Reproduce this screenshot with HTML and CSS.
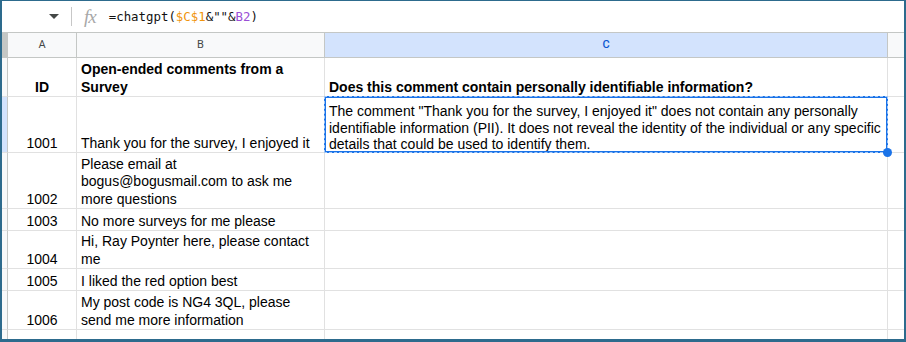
FILE: index.html
```html
<!DOCTYPE html>
<html lang="en">
<head>
  <meta charset="UTF-8">
  <title>Sheet - chatgpt PII check</title>
  <link rel="stylesheet" href="styles.css">
</head>
<body>

<div class="frame">
  <!-- Formula bar -->
  <div class="formula-bar">
    <span class="name-box"><span class="caret"></span></span>
    <span class="fx-sep"></span>
    <span class="fx">fx</span>
    <span class="formula">=chatgpt(<span class="ref-c">$C$1</span>&amp;""&amp;<span class="ref-b">B2</span>)</span>
  </div>

  <!-- Grid -->
  <div class="sheet">
    <!-- column headers -->
    <div class="corner"></div>
    <div class="col-head">A</div>
    <div class="col-head">B</div>
    <div class="col-head active">C</div>
    <div class="col-head"></div>

    <!-- Row 1 -->
    <div class="row-head"></div>
    <div class="cell center bold">ID</div>
    <div class="cell bold">Open-ended comments from a Survey</div>
    <div class="cell bold">Does this comment contain personally identifiable information?</div>
    <div class="cell"></div>

    <!-- Row 2 -->
    <div class="row-head active"></div>
    <div class="cell center">1001</div>
    <div class="cell">Thank you for the survey, I enjoyed it</div>
    <div class="cell selected">The comment "Thank you for the survey, I enjoyed it" does not contain any personally identifiable information (PII). It does not reveal the identity of the individual or any specific details that could be used to identify them.<span class="handle"></span></div>
    <div class="cell"></div>

    <!-- Row 3 -->
    <div class="row-head"></div>
    <div class="cell center">1002</div>
    <div class="cell">Please email at bogus@bogusmail.com to ask me more questions</div>
    <div class="cell"></div>
    <div class="cell"></div>

    <!-- Row 4 -->
    <div class="row-head"></div>
    <div class="cell center">1003</div>
    <div class="cell">No more surveys for me please</div>
    <div class="cell"></div>
    <div class="cell"></div>

    <!-- Row 5 -->
    <div class="row-head"></div>
    <div class="cell center">1004</div>
    <div class="cell">Hi, Ray Poynter here, please contact me</div>
    <div class="cell"></div>
    <div class="cell"></div>

    <!-- Row 6 -->
    <div class="row-head"></div>
    <div class="cell center">1005</div>
    <div class="cell">I liked the red option best</div>
    <div class="cell"></div>
    <div class="cell"></div>

    <!-- Row 7 -->
    <div class="row-head"></div>
    <div class="cell center">1006</div>
    <div class="cell">My post code is NG4 3QL, please send me more information</div>
    <div class="cell"></div>
    <div class="cell"></div>

    <!-- Row 8 (cut off) -->
    <div class="row-head"></div>
    <div class="cell"></div>
    <div class="cell"></div>
    <div class="cell"></div>
    <div class="cell"></div>
  </div>
</div>

</body>
</html>
```

FILE: styles.css
```css
/* BASE */
* {
  box-sizing: border-box;
}
body {
  margin: 0;
  padding: 0;
  background: #fff;
  font-family: "Liberation Sans", Arial, sans-serif;
  color: #000;
}

/* FRAME */
.frame {
  width: 906px;
  height: 342px;
  border: 2px solid #2d6b8d;
  border-top-width: 1px;
  border-bottom-width: 3px;
  overflow: hidden;
  background: #fff;
}

/* FORMULA BAR */
.formula-bar {
  height: 32px;
  display: flex;
  align-items: center;
  border-bottom: 1px solid #c4c7c5;
}
.name-box {
  width: 69px;
  display: flex;
  justify-content: flex-end;
  padding-right: 12px;
}
.caret {
  width: 0;
  height: 0;
  border-left: 5px solid transparent;
  border-right: 5px solid transparent;
  border-top: 5px solid #444746;
}
.fx-sep {
  width: 1px;
  height: 19px;
  background: #c7c7c7;
}
.fx {
  margin-left: 12px;
  font-family: "Liberation Serif", serif;
  font-style: italic;
  font-size: 19px;
  color: #a8a8a8;
  letter-spacing: -1px;
}
.formula {
  margin-left: 13px;
  font-family: "DejaVu Sans Mono", monospace;
  font-size: 12.4px;
  color: #111;
}
.ref-c { color: #f0950c; }
.ref-b { color: #9a4fd6; }

/* SHEET GRID */
.sheet {
  display: grid;
  grid-template-columns: 6px 69px 248px 563px 20px;
  grid-template-rows: 25px 39px 56px 56px 22px 38px 22px 39px 20px;
  font-size: 14px;
  line-height: 17.5px;
}
.corner {
  background: #c4c7c5;
  border-bottom: 1px solid #c4c7c5;
}
.col-head {
  display: flex;
  align-items: center;
  justify-content: center;
  background: #f8f9fa;
  border-right: 1px solid #c4c7c5;
  border-bottom: 1px solid #c4c7c5;
  font-family: Roboto, "Liberation Sans", sans-serif;
  font-size: 11px;
  color: #444746;
}
.col-head.active {
  background: #d3e3fd;
  color: #0b57d0;
  font-weight: 500;
}
.row-head {
  background: #f8f9fa;
  border-right: 1px solid #c4c7c5;
  border-bottom: 1px solid #e1e1e1;
}
.row-head.active {
  background: #d3e3fd;
}

.cell {
  display: flex;
  align-items: flex-end;
  padding: 0 4px 0 4px;
  border-right: 1px solid #e1e1e1;
  border-bottom: 1px solid #e1e1e1;
  overflow: hidden;
}
.center { justify-content: center; text-align: center; }
.bold { font-weight: bold; }

/* SELECTED CELL */
.selected {
  display: block;
  position: relative;
  overflow: visible;
  z-index: 1;
  line-height: 16.5px;
  padding-top: 6px;
}
.selected::before {
  content: "";
  position: absolute;
  top: -1px; left: -1px; right: -1px; bottom: -1px;
  border: 2px solid #1a73e8;
}
.selected::after {
  content: "";
  position: absolute;
  top: -1px; left: -1px; right: -1px; bottom: -1px;
  border: 1px dashed rgba(255,255,255,0.6);
}
.handle {
  position: absolute;
  right: -5px;
  bottom: -5px;
  width: 9px;
  height: 9px;
  border-radius: 50%;
  background: #1a73e8;
  z-index: 2;
}
```
